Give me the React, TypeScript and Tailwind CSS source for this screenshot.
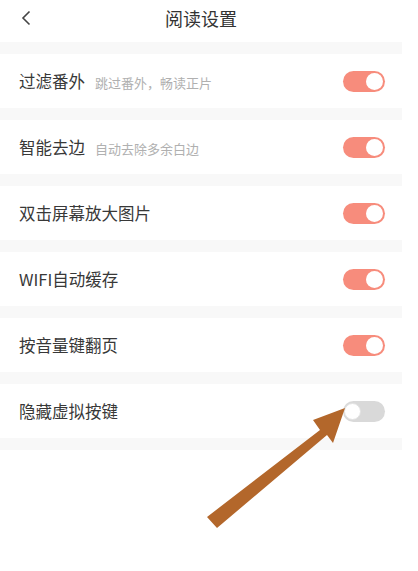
import React, { useState } from 'react';

interface Setting {
  id: string;
  label: string;
  hint?: string;
  on: boolean;
}

const initial: Setting[] = [
  { id: 'filter', label: '过滤番外', hint: '跳过番外，畅读正片', on: true },
  { id: 'trim', label: '智能去边', hint: '自动去除多余白边', on: true },
  { id: 'zoom', label: '双击屏幕放大图片', on: true },
  { id: 'wifi', label: 'WIFI自动缓存', on: true },
  { id: 'volume', label: '按音量键翻页', on: true },
  { id: 'keys', label: '隐藏虚拟按键', on: false },
];

function Toggle({ on, onClick }: { on: boolean; onClick: () => void }) {
  return (
    <button
      onClick={onClick}
      className={`relative h-[21px] w-[42px] rounded-full ${on ? 'bg-[#f78c7c]' : 'bg-[#d9d9d9]'}`}
    >
      <span
        className={`absolute top-[2px] h-[17px] w-[17px] rounded-full bg-white ${
          on ? 'right-[2px]' : 'left-[1px] border border-[#e2e2e2]'
        }`}
      />
    </button>
  );
}

function App() {
  const [settings, setSettings] = useState(initial);

  const toggle = (id: string) => {
    setSettings(settings.map(s => (s.id === id ? { ...s, on: !s.on } : s)));
  };

  return (
    <div
      className="relative min-h-screen w-[418px] bg-white"
      style={{ fontFamily: '"Noto Sans CJK SC", "Noto Sans", sans-serif' }}
    >
      <div className="w-[402px]">
        <div className="relative flex h-[42px] items-center justify-center">
          <svg className="absolute left-[20px] top-[10px] h-[16px] w-[12px]" viewBox="0 0 12 16">
            <path d="M9.5 1.5 L3 8 L9.5 14.5" fill="none" stroke="#444" strokeWidth="1.6" />
          </svg>
          <h1 className="text-[18px] leading-none text-[#333] -mt-[6px]">阅读设置</h1>
        </div>

        {settings.map(s => (
          <div key={s.id}>
            <div className="h-[12px] bg-[#f8f8f8]" />
            <div className="flex h-[54px] items-center justify-between pl-[19px] pr-[17px]">
              <div className="flex items-baseline">
                <span className="text-[16.5px] text-[#383838]">{s.label}</span>
                {s.hint && <span className="ml-[10px] text-[13px] text-[#b0b0b0]">{s.hint}</span>}
              </div>
              <Toggle on={s.on} onClick={() => toggle(s.id)} />
            </div>
          </div>
        ))}
        <div className="h-[12px] bg-[#f8f8f8]" />
      </div>

      <svg className="pointer-events-none absolute left-0 top-0" width="418" height="571" viewBox="0 0 418 571">
        <polygon
          points="207,517 320,430 313,420 345,408 333,443 327,435 217,528"
          fill="#b3672b"
        />
      </svg>
    </div>
  );
}

export default App;
